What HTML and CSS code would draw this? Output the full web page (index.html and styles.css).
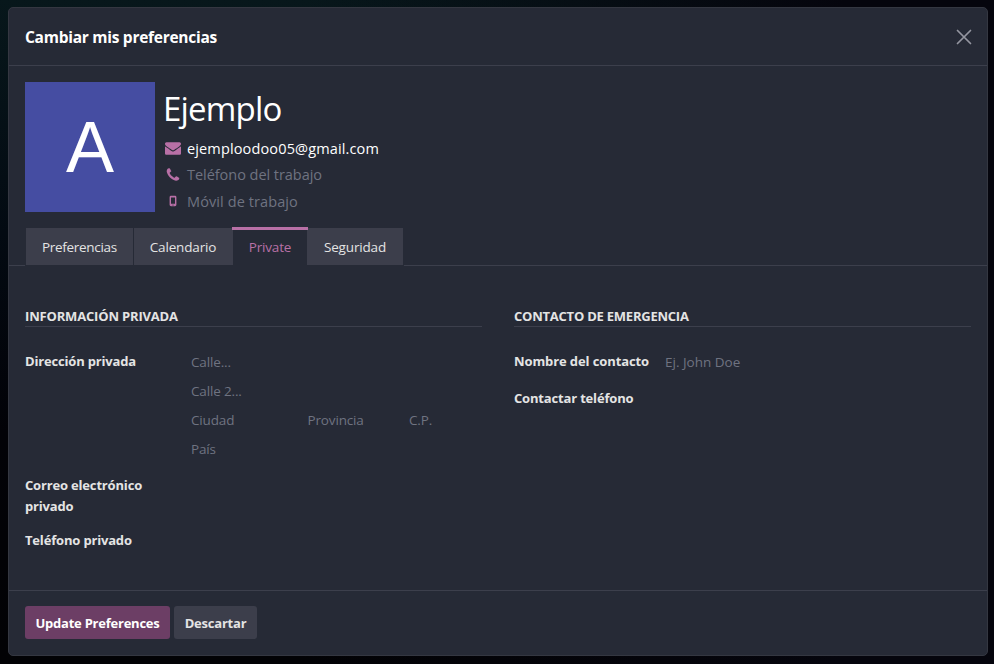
FILE: index.html
```html
<!DOCTYPE html>
<html lang="es">
<head>
<meta charset="utf-8">
<title>Cambiar mis preferencias</title>
<link rel="stylesheet" href="styles.css">
</head>
<body>
<div class="modal">
  <header class="modal-header">
    <h1 class="modal-title"><span>Cambiar mis preferencias</span></h1>
    <button class="close" aria-label="Cerrar"><svg width="16" height="16" viewBox="0 0 16 16"><path d="M1.500 1.500l13 13M14.500 1.500l-13 13" fill="none" stroke="currentColor" stroke-width="1.700" stroke-linecap="round"/></svg></button>
  </header>
  <main class="modal-body">
    <section class="profile">
      <div class="avatar"><span>A</span></div>
      <div class="identity">
        <h2 class="name"><span>Ejemplo</span></h2>
        <div class="contact email"><svg class="icon" width="16" height="16" viewBox="0 0 1792 1792"><path d="M1792 710v794q0 66-47 113t-113 47h-1472q-66 0-113-47t-47-113v-794q44 49 101 87 362 246 497 345 57 42 92.500 65.500t94.500 48 110 24.500h2q51 0 110-24.500t94.500-48 92.500-65.500q170-123 498-345 57-39 100-87zm0-294q0 79-49 151t-122 123q-376 261-468 325-10 7-42.500 31t-54 38.500-52 32.500-57.500 27-50 9h-2q-23 0-50-9t-57.500-27-52-32.500-54-38.500-42.500-31q-91-64-262-182.500t-205-142.500q-62-42-117-115.500t-55-136.500q0-78 41.500-130t118.500-52h1472q65 0 112.500 47t47.500 113z"/></svg><span class="email-text">ejemploodoo05@gmail.com</span></div>
        <div class="contact"><svg class="icon" width="16" height="16" viewBox="0 0 1792 1792"><path d="M1600 1240q0 27-10 70.500t-21 68.500q-21 50-122 106-94 51-186 51-27 0-53-3.500t-57.500-12.500-47-14.500-55.500-20.500-49-18q-98-35-175-83-127-79-264-216t-216-264q-48-77-83-175-3-9-18-49t-20.500-55.500-14.500-47-12.500-57.500-3.500-53q0-92 51-186 56-101 106-122 25-11 68.500-21t70.500-10q14 0 21 3 18 6 53 76 11 19 30 54t35 63.500 31 53.500q3 4 17.500 25t21.500 35.500 7 28.500q0 20-28.500 50t-62 55-62 53-28.500 46q0 9 5 22.500t8.500 20.500 14 24 11.500 19q76 137 174 235t235 174q2 1 19 11.500t24 14 20.500 8.500 22.500 5q18 0 46-28.500t53-62 55-62 50-28.500q14 0 28.500 7t35.500 21.500 25 17.500q25 15 53.500 31t63.500 35 54 30q70 35 76 53 3 7 3 21z"/></svg><span class="phone-text">Teléfono del trabajo</span></div>
        <div class="contact"><svg class="icon" width="16" height="16" viewBox="0 0 16 16"><path fill-rule="evenodd" d="M6 2.800h4q1.400 0 1.400 1.400v7.600q0 1.400-1.400 1.400h-4q-1.400 0-1.400-1.400v-7.600q0-1.400 1.400-1.400zM6 4.500v6.300h4v-6.300zM8 11.400a.6.6 0 1 0 0 1.200.6.6 0 0 0 0-1.200z"/></svg><span class="mobile-text">Móvil de trabajo</span></div>
      </div>
    </section>
    <nav class="tabs">
      <a class="tab tab-prefs"><span>Preferencias</span></a>
      <a class="tab tab-calendar"><span>Calendario</span></a>
      <a class="tab tab-private active"><span>Private</span></a>
      <a class="tab tab-security"><span>Seguridad</span></a>
    </nav>
    <div class="groups">
      <section class="group">
        <h3><span class="heading-private">Información privada</span></h3>
        <div class="field address-field">
          <div class="label"><span>Dirección privada</span></div>
          <div class="address">
            <div><span>Calle...</span></div>
            <div><span>Calle 2...</span></div>
            <div class="city-row"><span>Ciudad</span><span>Provincia</span><span>C.P.</span></div>
            <div><span>País</span></div>
          </div>
        </div>
        <div class="field email-field"><div class="label"><span>Correo electrónico privado</span></div></div>
        <div class="field"><div class="label"><span>Teléfono privado</span></div></div>
      </section>
      <section class="group">
        <h3><span class="heading-emergency">Contacto de emergencia</span></h3>
        <div class="field contact-field">
          <div class="label"><span>Nombre del contacto</span></div>
          <div class="value"><span>Ej. John Doe</span></div>
        </div>
        <div class="field"><div class="label"><span>Contactar teléfono</span></div></div>
      </section>
    </div>
  </main>
  <footer class="modal-footer">
    <button class="btn primary"><span>Update Preferences</span></button>
    <button class="btn secondary"><span>Descartar</span></button>
  </footer>
</div>
</body>
</html>
```
FILE: styles.css
```css
* { box-sizing: border-box; }
body {
  margin: 0;
  height: 664px;
  padding: 7px 6px 8px 8px;
  overflow: hidden;
  background: linear-gradient(90deg, transparent 30%, #05050d 85%), linear-gradient(#07171b, #030a12 35%, #020207 65%, #020205);
  color: #e4e4e4;
  font: 13.5px/21px "Open Sans", "Noto Sans", sans-serif;
}
h1, h2, h3 { margin: 0; }
button { border: 0; font: inherit; color: inherit; }
.modal {
  height: 649px;
  display: flex;
  flex-direction: column;
  background: #262a36;
  border: 1px solid #343741;
  border-radius: 5px;
}
.modal-header {
  height: 58px;
  flex: none;
  display: flex;
  align-items: center;
  justify-content: space-between;
  padding: 0 15px 0 16px;
  border-bottom: 1px solid #3c3f4c;
}
.modal-title { font-size: 15.5px; line-height: 24px; font-weight: 700; color: #fff; letter-spacing: -0.27px; }
.close { display: flex; padding: 0; margin-top: 1px; background: none; color: #9496a0; }
.modal-body { flex: 1; min-height: 0; }
.profile { display: flex; gap: 9px; height: 146px; padding: 16px 16px 0; }
.avatar {
  width: 130px;
  height: 130px;
  display: flex;
  align-items: center;
  justify-content: center;
  background: #454da2;
  color: #fff;
  font-family: "Liberation Sans", sans-serif;
  font-size: 72px;
  line-height: 130px;
}
.name { margin: 5px 0 0 -1px; height: 48px; font-size: 33px; line-height: 44px; font-weight: 400; color: #fff; letter-spacing: -0.8px; }
.contact { display: flex; align-items: center; gap: 6px; height: 26.5px; font-size: 14.5px; color: #6f7381; white-space: nowrap; }
.email { color: #fff; letter-spacing: 0.14px; }
.mobile-text { letter-spacing: 0.1px; }
.phone-text { letter-spacing: -0.04px; }
.icon { fill: #b870a6; flex: none; margin-left: 1px; }
.tabs {
  display: flex;
  align-items: flex-end;
  height: 54px;
  padding-left: 16px;
  border-bottom: 1px solid #3c3f4c;
}
.tab {
  display: flex;
  align-items: center;
  justify-content: center;
  height: 38px;
  margin-bottom: -1px;
  padding-top: 1px;
  background: #3c3e4b;
  border: 1px solid #262a36;
  border-top: 0;
  color: #e4e4e4;
  letter-spacing: -0.3px;
}
.tab-prefs { width: 109px; }
.tab-calendar { width: 101px; margin-left: -1px; padding-right: 1px; letter-spacing: -0.15px; }
.tab-private { position: relative; width: 74px; margin-left: -1px; letter-spacing: -0.2px; }
.tab-security { width: 97px; border-left: 0; letter-spacing: -0.15px; }
.tab.active { padding-top: 0; border: 0; background: #262a36; color: #b870a6; }
.tab.active::before { content: ""; position: absolute; top: -1px; left: -1px; right: -1px; height: 3px; background: #b870a6; }
.groups { display: grid; grid-template-columns: 457px 457px; column-gap: 32px; padding: 39px 16px 0; }
.group h3 { height: 22px; border-bottom: 1px solid #3c3f4c; font-size: 13px; line-height: 22px; font-weight: 700; text-transform: uppercase; margin-bottom: 24px; }
.heading-private { letter-spacing: -0.17px; }
.heading-emergency { letter-spacing: -0.23px; }
.field { display: grid; grid-template-columns: 150px 1fr; column-gap: 16px; }
.label { font-size: 13px; font-weight: 700; letter-spacing: -0.17px; }
.address-field { height: 124px; }
.address { padding-top: 1px; color: #6f7381; letter-spacing: -0.15px; }
.address > div { height: 29px; }
.city-row { display: grid; grid-template-columns: 116.5px 101.5px auto; }
.email-field { height: 55px; }
.contact-field { grid-template-columns: 135px 1fr; height: 37px; }
.contact-field .label { white-space: nowrap; letter-spacing: -0.1px; }
.value { padding-top: 1px; color: #6f7381; }
.modal-footer {
  height: 65px;
  flex: none;
  display: flex;
  align-items: flex-start;
  gap: 4px;
  padding: 15px 16px;
  border-top: 1px solid #3c3f4c;
}
.btn { height: 33px; padding: 1px 0 0; border-radius: 3px; font-size: 13px; font-weight: 700; white-space: nowrap; }
.primary { width: 145px; background: #6c3e65; color: #fff; letter-spacing: -0.23px; }
.secondary { width: 83px; background: #3c3e4b; letter-spacing: -0.22px; }
```
